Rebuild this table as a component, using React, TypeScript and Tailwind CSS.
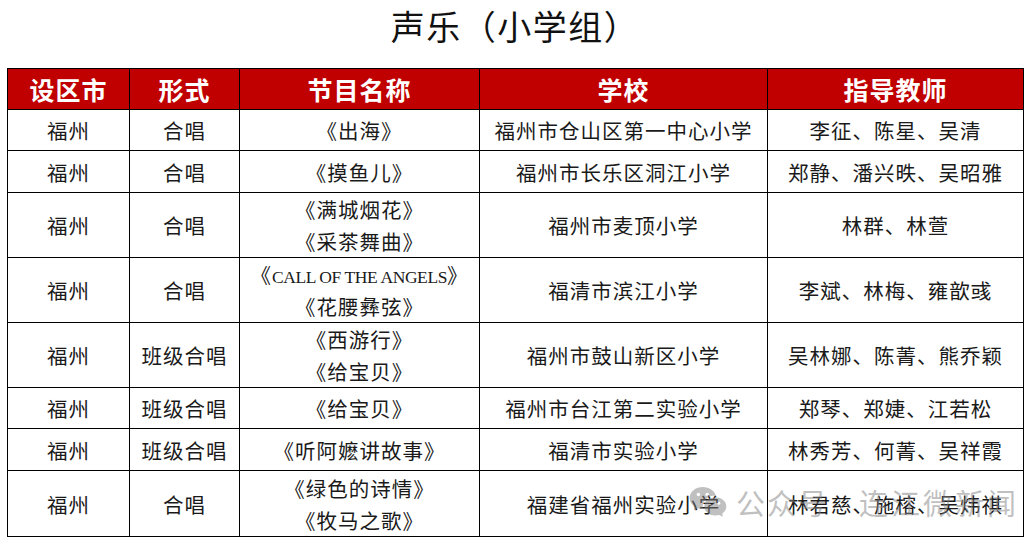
import { RiWechatFill } from 'react-icons/ri';

type Row = {
  city: string;
  form: string;
  titles: React.ReactNode[];
  school: string;
  teachers: string;
  h: string;
};

const rows: Row[] = [
  { city: '福州', form: '合唱', titles: ['《出海》'], school: '福州市仓山区第一中心小学', teachers: '李征、陈星、吴清', h: 'h-[41px]' },
  { city: '福州', form: '合唱', titles: ['《摸鱼儿》'], school: '福州市长乐区洞江小学', teachers: '郑静、潘兴昳、吴昭雅', h: 'h-[42px]' },
  { city: '福州', form: '合唱', titles: ['《满城烟花》', '《采茶舞曲》'], school: '福州市麦顶小学', teachers: '林群、林萱', h: 'h-[65px]' },
  {
    city: '福州',
    form: '合唱',
    titles: [
      <>
        《<span className="font-['Liberation_Serif',serif] text-[17.5px] tracking-[-0.4px]">CALL OF THE ANGELS</span>》
      </>,
      '《花腰彝弦》'
    ],
    school: '福清市滨江小学',
    teachers: '李斌、林梅、雍歆彧',
    h: 'h-[65px]'
  },
  { city: '福州', form: '班级合唱', titles: ['《西游行》', '《给宝贝》'], school: '福州市鼓山新区小学', teachers: '吴林娜、陈菁、熊乔颖', h: 'h-[65px]' },
  { city: '福州', form: '班级合唱', titles: ['《给宝贝》'], school: '福州市台江第二实验小学', teachers: '郑琴、郑婕、江若松', h: 'h-[41px]' },
  { city: '福州', form: '班级合唱', titles: ['《听阿嬷讲故事》'], school: '福清市实验小学', teachers: '林秀芳、何菁、吴祥霞', h: 'h-[42px]' },
  { city: '福州', form: '合唱', titles: ['《绿色的诗情》', '《牧马之歌》'], school: '福建省福州实验小学', teachers: '林君慈、施榕、吴炜祺', h: 'h-[66px]' }
];

const headers = ['设区市', '形式', '节目名称', '学校', '指导教师'];
const widths = ['w-[122px]', 'w-[110px]', 'w-[240px]', 'w-[288px]', 'w-[256px]'];

const cell = 'border border-black text-center align-middle p-0 whitespace-nowrap';

export default function App() {
  return (
    <div className="relative w-[1030px] h-[541px] bg-white font-['Noto_Sans_CJK_SC',sans-serif] overflow-hidden">
      <div className="h-[68px] flex items-center justify-center">
        <h1 className="text-[34px] font-normal text-[#111] tracking-[1.5px] leading-none -mt-[16px]">声乐（小学组）</h1>
      </div>
      <table className="ml-[7px] border-collapse table-fixed w-[1016px]">
        <thead>
          <tr className="h-[41px] bg-[#c00000]">
            {headers.map((t, i) => (
              <th key={t} className={`${cell} ${widths[i]} text-white text-[25px] font-bold leading-none tracking-[1px]`}>
                {t}
              </th>
            ))}
          </tr>
        </thead>
        <tbody className="text-[20.5px] text-[#1a1a1a] leading-[32px] tracking-[1px]">
          {rows.map((r, i) => (
            <tr key={i} className={r.h}>
              <td className={cell}>{r.city}</td>
              <td className={cell}>{r.form}</td>
              <td className={cell}>
                {r.titles.map((t, j) => (
                  <div key={j} className="h-[32px] leading-[32px]">
                    {t}
                  </div>
                ))}
              </td>
              <td className={cell}>{r.school}</td>
              <td className={cell}>{r.teachers}</td>
            </tr>
          ))}
        </tbody>
      </table>
      <div className="absolute left-[688px] top-[482px] flex items-center whitespace-nowrap text-[rgba(130,130,130,0.5)] pointer-events-none">
        <RiWechatFill className="w-[40px] h-[40px]" />
        <span className="ml-[8px] text-[29px] leading-none tracking-[2px]">公众号</span>
        <span className="ml-[30px] text-[29px] leading-none tracking-[3px]">连江微新闻</span>
      </div>
    </div>
  );
}
